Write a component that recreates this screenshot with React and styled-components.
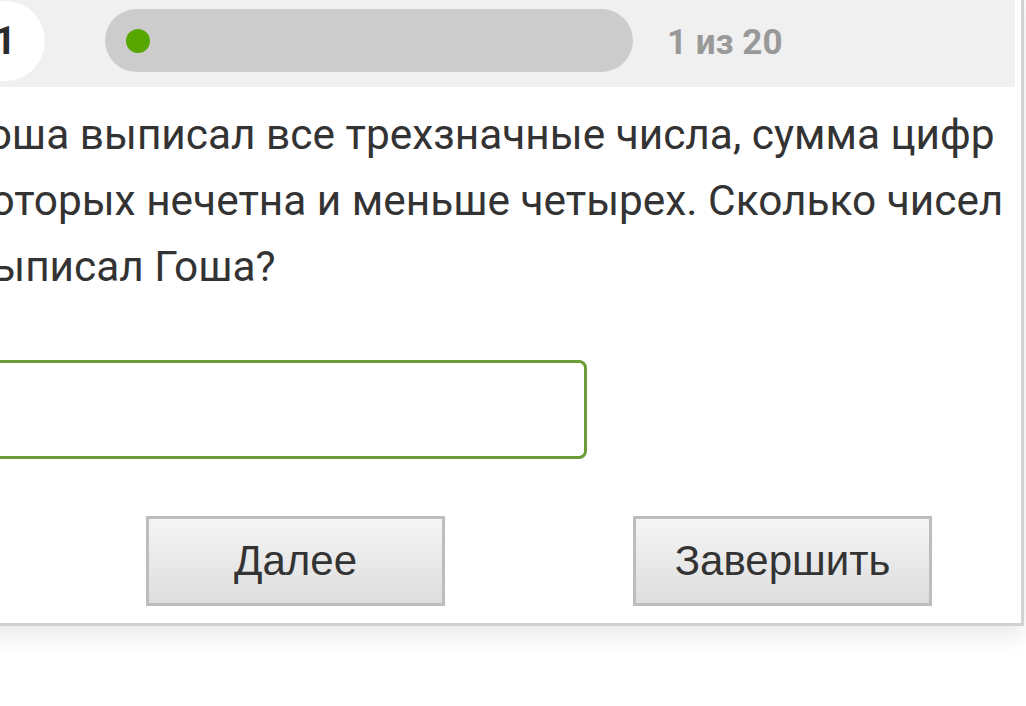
import React from "react";
import styled, { createGlobalStyle } from "styled-components";

const Global = createGlobalStyle`
  html, body {
    margin: 0;
    padding: 0;
    background: #ffffff;
    overflow: hidden;
  }
  body {
    font-family: Roboto, "Noto Sans", Arial, sans-serif;
  }
`;

const Page = styled.div`
  width: 1026px;
  height: 706px;
  overflow: hidden;
`;

const Card = styled.div`
  box-sizing: border-box;
  margin-left: -60px;
  margin-top: -14px;
  width: 1084px;
  border: 3px solid #d2d2d2;
  background: #ffffff;
  padding: 5px 6px 17px 5px;
  box-shadow: 0 10px 22px rgba(0, 0, 0, 0.09);
`;

const Header = styled.div`
  display: flex;
  align-items: center;
  height: 93px;
  padding-left: 17px;
  background: #f0f0f0;
`;

const NumberBadge = styled.div`
  flex: none;
  width: 80px;
  height: 80px;
  border-radius: 50%;
  background: #ffffff;
  display: flex;
  align-items: center;
  justify-content: center;
  font-family: Roboto, Arial, sans-serif;
  font-weight: 700;
  font-size: 39px;
  color: #2b2b2b;
`;

const Progress = styled.div`
  flex: none;
  margin-left: 60px;
  width: 528px;
  height: 63px;
  border-radius: 32px;
  background: #cccccc;
  display: flex;
  align-items: center;
  padding-left: 21px;
  box-sizing: border-box;
`;

const Dot = styled.span`
  width: 24px;
  height: 24px;
  border-radius: 50%;
  background: #58a700;
`;

const Counter = styled.div`
  margin-left: 34px;
  font-family: Roboto, Arial, sans-serif;
  font-weight: 700;
  font-size: 35px;
  color: #999999;
  padding-top: 4px;
`;

const Body = styled.div`
  padding-left: 20px;
`;

const Question = styled.p`
  margin: 15px 0 0;
  font-family: Roboto, Arial, sans-serif;
  font-size: 42.4px;
  line-height: 66px;
  color: #333333;
  width: 1052px;
`;

const AnswerInput = styled.input`
  display: block;
  box-sizing: border-box;
  margin: 60px 0 0 -68px;
  width: 687px;
  height: 99px;
  border: 3px solid #6b9b35;
  border-radius: 8px;
  background: #ffffff;
  outline: none;
  font-size: 36px;
  font-family: Roboto, Arial, sans-serif;
`;

const Actions = styled.div`
  display: flex;
  gap: 188px;
  margin-top: 57px;
  padding-left: 178px;
`;

const ActionButton = styled.button`
  box-sizing: border-box;
  width: 299px;
  height: 90px;
  border: 3px solid #bdbdbd;
  border-radius: 0;
  background: linear-gradient(#f5f5f5, #dddddd);
  font-family: "Liberation Sans", Arial, sans-serif;
  font-size: 42px;
  color: #333333;
  cursor: pointer;
  padding: 0;
`;

export default function App() {
  return (
    <Page>
      <Global />
      <Card>
        <Header>
          <NumberBadge>1</NumberBadge>
          <Progress>
            <Dot />
          </Progress>
          <Counter>1 из 20</Counter>
        </Header>
        <Body>
          <Question>
            Гоша выписал все трехзначные числа, сумма цифр которых нечетна и меньше четырех. Сколько чисел выписал Гоша?
          </Question>
          <AnswerInput type="text" />
          <Actions>
            <ActionButton>Далее</ActionButton>
            <ActionButton>Завершить</ActionButton>
          </Actions>
        </Body>
      </Card>
    </Page>
  );
}
